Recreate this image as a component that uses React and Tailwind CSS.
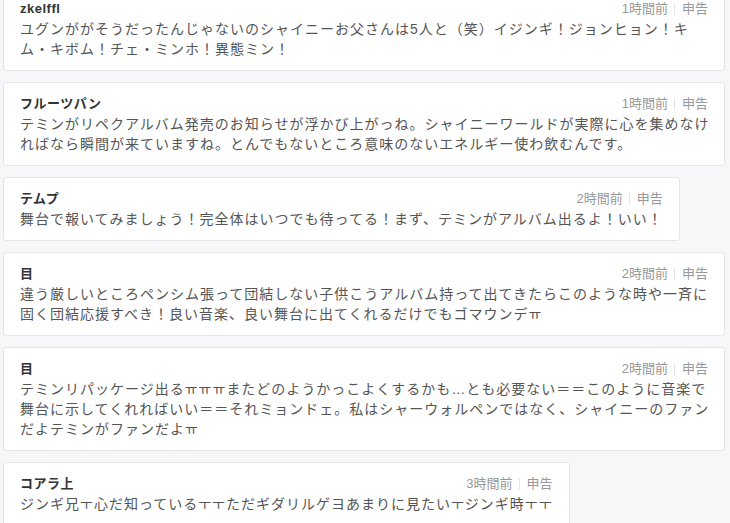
// App.jsx
const comments = [
  {
    name: "zkelffl",
    time: "1時間前",
    lines: [
      "ユグンががそうだったんじゃないのシャイニーお父さんは5人と（笑）イジンギ！ジョンヒョン！キ",
      "ム・キボム！チェ・ミンホ！異態ミン！",
    ],
  },
  {
    name: "フルーツパン",
    time: "1時間前",
    lines: [
      "テミンがリペクアルバム発売のお知らせが浮かび上がっね。シャイニーワールドが実際に心を集めなけ",
      "ればなら瞬間が来ていますね。とんでもないところ意味のないエネルギー使わ飲むんです。",
    ],
  },
  {
    name: "テムプ",
    time: "2時間前",
    lines: ["舞台で報いてみましょう！完全体はいつでも待ってる！まず、テミンがアルバム出るよ！いい！"],
  },
  {
    name: "目",
    time: "2時間前",
    lines: [
      "違う厳しいところペンシム張って団結しない子供こうアルバム持って出てきたらこのような時や一斉に",
      "固く団結応援すべき！良い音楽、良い舞台に出てくれるだけでもゴマウンデㅠ",
    ],
  },
  {
    name: "目",
    time: "2時間前",
    lines: [
      "テミンリパッケージ出るㅠㅠㅠまたどのようかっこよくするかも…とも必要ない＝＝このように音楽で",
      "舞台に示してくれればいい＝＝それミョンドェ。私はシャーウォルペンではなく、シャイニーのファン",
      "だよテミンがファンだよㅠ",
    ],
  },
  {
    name: "コアラ上",
    time: "3時間前",
    lines: ["ジンギ兄ㅜ心だ知っているㅜㅜただギダリルゲヨあまりに見たいㅜジンギ時ㅜㅜ"],
  },
];

function Comment({ name, time, lines }) {
  return (
    <div
      className={`${
        lines.length > 1 ? "w-full" : "w-fit"
      } max-w-full rounded-[3px] border border-[#e3e6ea] bg-white px-4 py-[11px]`}
    >
      <div className="flex h-5 items-center justify-between gap-6">
        <span className="text-[13px] font-bold tracking-[0.5px] text-[#333]">{name}</span>
        <div className="flex items-center text-[13px] text-[#999]">
          <span>{time}</span>
          <span className="ml-[6px] mr-[7px] h-3 w-px bg-[#e4e4e4]" />
          <span>申告</span>
        </div>
      </div>
      {lines.map((line, i) => (
        <div key={i} className="whitespace-nowrap text-[14px] leading-5 tracking-[1px] text-[#555]">
          {line}
        </div>
      ))}
    </div>
  );
}

export default function App() {
  return (
    <div
      className="min-h-screen overflow-hidden bg-[#f7f7f9]"
      style={{ fontFamily: '"Liberation Sans", "Noto Sans CJK JP", sans-serif' }}
    >
      <div className="-mt-[13px] flex flex-col gap-[11px] pl-[3px] pr-[5px]">
        {comments.map((c, i) => (
          <Comment key={i} {...c} />
        ))}
      </div>
    </div>
  );
}
